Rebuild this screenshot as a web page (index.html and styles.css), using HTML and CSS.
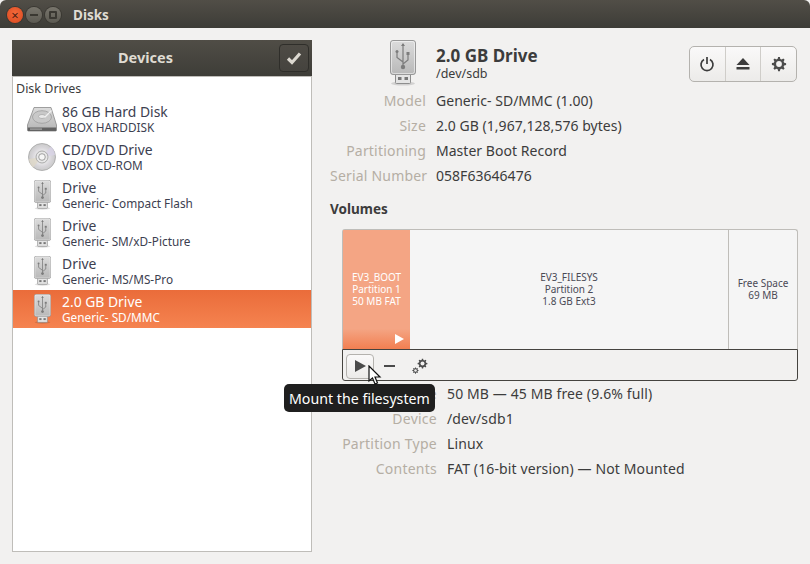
FILE: index.html
```html
<!DOCTYPE html>
<html lang="en">
<head>
<meta charset="utf-8">
<title>Disks</title>
<link rel="stylesheet" href="styles.css">
</head>
<body>
<svg class="defs" width="0" height="0" aria-hidden="true">
  <defs>
    <linearGradient id="usbBody" x1="0" y1="0" x2="0" y2="1"><stop offset="0" stop-color="#dcdcdc"/><stop offset="1" stop-color="#b8b8b8"/></linearGradient>
    <linearGradient id="hddTop" x1="0" y1="0" x2="0" y2="1"><stop offset="0" stop-color="#dcdcdc"/><stop offset="1" stop-color="#b4b4b4"/></linearGradient>
    <radialGradient id="cdDisc" cx="0.5" cy="0.5" r="0.5"><stop offset="0.3" stop-color="#f2f2f2"/><stop offset="0.7" stop-color="#d8d6da"/><stop offset="1" stop-color="#cacaca"/></radialGradient>
    <symbol id="usb" viewBox="0 0 26 46">
      <ellipse cx="13" cy="43.500" rx="12" ry="2" fill="#000" opacity=".13"/>
      <rect x="5.500" y="33" width="15" height="10.500" rx="1" fill="#e4e4e4" stroke="#8d8d8d"/>
      <rect x="8" y="37" width="3.500" height="3" fill="#777"/>
      <rect x="14.500" y="37" width="3.500" height="3" fill="#777"/>
      <rect x=".5" y=".5" width="25" height="34" rx="2.500" fill="url(#usbBody)" stroke="#989898"/>
      <rect x="1.500" y="1.500" width="23" height="32" rx="2" fill="none" stroke="#fff" stroke-opacity=".5"/>
      <path d="M13 4v22M13 22l-6-4.500v-5M13 24l5-4v-5" fill="none" stroke="#7c7c7c" stroke-width="1.200"/>
      <path d="M13 3l-2 3h4z" fill="#7c7c7c"/>
      <circle cx="7" cy="11.500" r="1.500" fill="#7c7c7c"/>
      <rect x="16.500" y="12" width="3" height="3" fill="#7c7c7c"/>
      <circle cx="13" cy="27" r="2.200" fill="#7c7c7c"/>
    </symbol>
    <symbol id="hdd" viewBox="0 0 30 25">
      <path d="M7 .5h17l5.500 17.500v5a1 1 0 0 1-1 1h-27a1 1 0 0 1-1-1v-5z" fill="url(#hddTop)" stroke="#8a8a8a" stroke-width=".8"/>
      <rect x=".8" y="20.500" width="28.400" height="3.500" fill="#626262"/>
      <rect x="3" y="21.500" width="12" height="1.200" fill="#aaa"/>
      <ellipse cx="15" cy="10" rx="9.500" ry="6.300" fill="#c8c8c8" stroke="#969696" stroke-width=".7"/>
      <ellipse cx="15" cy="9.500" rx="3.500" ry="2" fill="#e8e8e8" stroke="#9c9c9c" stroke-width=".6"/>
      <path d="M24.500 3.500l-7 7" stroke="#f0f0f0" stroke-width="1.200"/>
    </symbol>
    <symbol id="cd" viewBox="0 0 28 28">
      <circle cx="14" cy="14" r="13.500" fill="url(#cdDisc)" stroke="#a4a4a4" stroke-width=".8"/>
      <path d="M14 14L23 3.500A13 13 0 0 1 27 12z" fill="#d8d3e6" opacity=".8"/>
      <path d="M14 14L5 24.500A13 13 0 0 1 1 16z" fill="#ded8c8" opacity=".8"/>
      <circle cx="14" cy="14" r="6" fill="#e8e8e8" stroke="#9a9a9a" stroke-width=".8"/>
      <circle cx="14" cy="14" r="3.300" fill="#f6f6f6" stroke="#8a8a8a" stroke-width=".8"/>
    </symbol>
    <symbol id="gear" viewBox="0 0 16 16">
      <path d="M7.100 1h1.800l.4 1.900 1.400.6 1.600-1 1.300 1.300-1 1.600.6 1.400 1.900.4v1.800l-1.900.4-.6 1.400 1 1.600-1.300 1.300-1.600-1-1.400.6-.4 1.900H7.100l-.4-1.900-1.400-.6-1.600 1-1.300-1.300 1-1.600-.6-1.400-1.900-.4V7.100l1.900-.4.6-1.400-1-1.600 1.300-1.300 1.600 1 1.400-.6z" fill="#4c4c4c"/>
      <circle cx="8" cy="8" r="2.900" fill="#f2f1f0"/>
    </symbol>
  </defs>
</svg>

<div class="window">
  <header class="titlebar">
    <div class="wm">
      <span class="wm-btn wm-close">×</span>
      <span class="wm-btn wm-min"><i class="wm-dash"></i></span>
      <span class="wm-btn wm-max"><i class="wm-square"></i></span>
    </div>
    <span class="wm-title">Disks</span>
  </header>

  <div class="content">
    <aside class="sidebar">
      <div class="side-head">
        <span class="side-title">Devices</span>
        <span class="check-btn">
          <svg width="16" height="14" viewBox="0 0 16 14"><path d="M2 7.500l4 4L14 2.500" fill="none" stroke="#dcd8d0" stroke-width="3.200"/></svg>
        </span>
      </div>
      <div class="side-list">
        <div class="group-label">Disk Drives</div>
        <div class="row"><span class="row-icon"><svg width="30" height="25"><use href="#hdd"/></svg></span><span class="row-text"><b>86 GB Hard Disk</b><small>VBOX HARDDISK</small></span></div>
        <div class="row"><span class="row-icon"><svg width="28" height="28"><use href="#cd"/></svg></span><span class="row-text"><b>CD/DVD Drive</b><small>VBOX CD-ROM</small></span></div>
        <div class="row"><span class="row-icon"><svg width="17" height="30"><use href="#usb"/></svg></span><span class="row-text"><b>Drive</b><small>Generic- Compact Flash</small></span></div>
        <div class="row"><span class="row-icon"><svg width="17" height="30"><use href="#usb"/></svg></span><span class="row-text"><b>Drive</b><small>Generic- SM/xD-Picture</small></span></div>
        <div class="row"><span class="row-icon"><svg width="17" height="30"><use href="#usb"/></svg></span><span class="row-text"><b>Drive</b><small>Generic- MS/MS-Pro</small></span></div>
        <div class="row selected"><span class="row-icon"><svg width="17" height="30"><use href="#usb"/></svg></span><span class="row-text"><b>2.0 GB Drive</b><small>Generic- SD/MMC</small></span></div>
      </div>
    </aside>

    <main class="detail">
      <div class="drive-head">
        <svg class="drive-icon" width="26" height="46"><use href="#usb"/></svg>
        <div class="drive-names">
          <h1>2.0 GB Drive</h1>
          <p>/dev/sdb</p>
        </div>
        <div class="btn-group">
          <span class="tool"><svg width="16" height="16" viewBox="0 0 16 16"><path d="M5 3.500a6 6 0 1 0 6 0M8 1v7" fill="none" stroke="#3c3c3c" stroke-width="1.700"/></svg></span>
          <span class="tool"><svg width="14" height="12" viewBox="0 0 14 12"><path d="M7 0l6.500 7H.5z" fill="#3c3c3c"/><rect x=".5" y="9" width="13" height="2.500" fill="#3c3c3c"/></svg></span>
          <span class="tool"><svg width="16" height="16"><use href="#gear"/></svg></span>
        </div>
      </div>

      <dl class="props">
        <dt>Model</dt><dd>Generic- SD/MMC (1.00)</dd>
        <dt>Size</dt><dd>2.0 GB (1,967,128,576 bytes)</dd>
        <dt>Partitioning</dt><dd>Master Boot Record</dd>
        <dt>Serial Number</dt><dd>058F63646476</dd>
      </dl>

      <h2 class="volumes-title">Volumes</h2>

      <section class="volumes">
        <div class="parts">
          <div class="part part-sel">
            <span>EV3_BOOT<br>Partition 1<br>50 MB FAT</span>
            <svg class="part-play" width="9" height="10" viewBox="0 0 9 10"><path d="M0 0l9 5-9 5z" fill="#fff"/></svg>
          </div>
          <div class="part part-main"><span>EV3_FILESYS<br>Partition 2<br>1.8 GB Ext3</span></div>
          <div class="part part-free"><span>Free Space<br>69 MB</span></div>
        </div>
        <div class="vol-tools">
          <span class="play-btn"><svg width="11" height="12" viewBox="0 0 11 12"><path d="M0 0l11 6-11 6z" fill="#4a4a4a"/></svg></span>
          <span class="vol-tool"><svg width="11" height="2" viewBox="0 0 11 2"><rect width="11" height="2" fill="#4a4a4a"/></svg></span>
          <span class="vol-tool vol-gears"><svg width="16" height="16" viewBox="0 0 16 16"><use href="#gear" x="5" y="0" width="11" height="11"/><use href="#gear" x="0" y="9" width="7" height="7"/></svg></span>
        </div>
      </section>

      <dl class="props props-sub">
        <dt>Size</dt><dd>50 MB — 45 MB free (9.6% full)</dd>
        <dt>Device</dt><dd>/dev/sdb1</dd>
        <dt>Partition Type</dt><dd>Linux</dd>
        <dt>Contents</dt><dd>FAT (16-bit version) — Not Mounted</dd>
      </dl>
    </main>
  </div>

  <div class="tooltip">Mount the filesystem</div>
  <svg class="cursor" width="14" height="20" viewBox="0 0 14 20"><path d="M1 1v15l3.500-3 2.500 6 2.500-1-2.500-6H12z" fill="#fff" stroke="#111" stroke-width="1.200"/></svg>
</div>
</body>
</html>
```

FILE: styles.css
```css
* { box-sizing: border-box; }
html, body { margin: 0; padding: 0; background: #3c3b37; }
body { font-family: "Noto Sans", "Open Sans", sans-serif; color: #3c3c3c; }
.defs { position: absolute; }

.window { position: relative; width: 810px; height: 564px; overflow: hidden; background: #f2f1f0; display: flex; flex-direction: column; }

.titlebar { flex: none; height: 28px; display: flex; align-items: center; padding: 2px 0 0 7px; background: linear-gradient(#514e47, #3d3c37); border-radius: 6px 6px 0 0; }
.wm { display: flex; gap: 3px; }
.wm-btn { width: 16px; height: 16px; border-radius: 50%; display: flex; align-items: center; justify-content: center; }
.wm-close { background: radial-gradient(circle at 50% 40%, #f4693a, #d9481f); color: #4a2012; font-size: 13px; line-height: 1; box-shadow: 0 0 0 1px #3a3832; }
.wm-min, .wm-max { background: linear-gradient(#78756c, #5c5a52); box-shadow: 0 0 0 1px #3a3832; }
.wm-dash { width: 8px; height: 2px; background: #3a3832; }
.wm-square { width: 8px; height: 8px; border: 2px solid #3a3832; border-radius: 1px; }
.wm-title { margin-left: 12px; font-size: 13.500px; font-weight: 700; color: #dfdbd2; }

.content { flex: 1; display: flex; align-items: flex-start; padding: 12px 12px 0; }

.sidebar { flex: none; width: 300px; height: 512px; display: flex; flex-direction: column; }
.side-head { flex: none; height: 36px; display: flex; align-items: center; position: relative; padding-bottom: 2px; background: linear-gradient(#504d46, #3e3d38); }
.side-title { width: 100%; padding-right: 33px; text-align: center; font-size: 14.500px; font-weight: 700; color: #dfdbd2; }
.check-btn { position: absolute; right: 3px; top: 4px; width: 30px; height: 28px; display: flex; align-items: center; justify-content: center; border: 1px solid #2f2e2a; border-radius: 4px; background: linear-gradient(#4e4b45, #45433e); }
.side-list { flex: 1; background: #fff; border: 1px solid #bfbdb9; }
.group-label { height: 23px; padding: 3px 0 0 3px; font-size: 12.500px; line-height: 17px; color: #3c3c3c; }
.row { height: 38px; display: flex; align-items: center; }
.row-icon { flex: none; width: 49px; display: flex; justify-content: center; padding-left: 9px; }
.row-text { display: flex; flex-direction: column; margin-top: -2px; color: #3c4050; }
.row-text b { font-weight: 400; font-size: 13.900px; line-height: 17px; }
.row-text small { font-size: 11.800px; line-height: 14px; }
.row.selected { background: linear-gradient(#ea6c3a, #f58350); }
.row.selected .row-text { color: #fff; }

.detail { flex: 1; min-width: 0; margin-left: 18px; }
.drive-head { height: 48px; display: flex; align-items: flex-start; padding: 0 1px 0 60px; }
.drive-icon { flex: none; margin-right: 20px; }
.drive-names { padding-top: 5px; }
.drive-names h1 { margin: 0; font-size: 17px; line-height: 22px; font-weight: 700; color: #3c3c3c; }
.drive-names p { margin: 0; font-size: 12.500px; line-height: 14px; }
.btn-group { margin: 6px 0 0 auto; width: 108px; height: 36px; display: flex; border: 1px solid #b4b2ae; border-radius: 5px; background: linear-gradient(#faf9f9, #ecebe9); }
.tool { flex: 1; display: flex; align-items: center; justify-content: center; border-left: 1px solid #cfcdc9; }
.tool:first-child { border-left: 0; }

.props { margin: 0; display: grid; grid-template-columns: 96px 1fr; column-gap: 10px; grid-auto-rows: 25px; align-items: center; font-size: 14px; }
.props dt { text-align: right; letter-spacing: .2px; color: #b5aea4; white-space: nowrap; }
.props dd { margin: 0; letter-spacing: .03px; color: #3c3c3c; white-space: nowrap; }
.volumes-title { margin: 12px 0 10px; font-size: 13.500px; line-height: 19px; font-weight: 700; color: #3c3c3c; }

.volumes { margin-left: 12px; width: 456px; height: 152px; display: flex; flex-direction: column; }
.parts { height: 120px; display: flex; border: 1px solid #bfbdb9; border-bottom: 0; border-radius: 3px 3px 0 0; background: #f5f5f5; }
.part { position: relative; display: flex; align-items: center; justify-content: center; text-align: center; font-size: 10px; line-height: 12px; color: #4a4a55; }
.part span { margin-top: -2px; }
.part-sel { width: 67px; color: #fff; background: linear-gradient(#f4a584 83%, #f27f51); }
.part-main { flex: 1; }
.part-free { width: 69px; border-left: 1px solid #bfbdb9; }
.part-play { position: absolute; right: 6px; bottom: 5px; }
.vol-tools { height: 32px; display: flex; align-items: center; padding: 2px 0 0 3px; border: 1px solid #45433f; border-radius: 0 0 3px 3px; }
.play-btn { width: 28px; height: 25px; display: flex; align-items: center; justify-content: center; border: 1px solid #b4b2ae; border-radius: 4px; background: linear-gradient(#faf9f9, #ecebe9); }
.vol-tool { width: 30px; display: flex; align-items: center; justify-content: center; }
.vol-gears { padding-left: 2px; }

.props-sub { margin: 0 0 0 12px; grid-template-columns: 95px 1fr; }
.props-sub dt { letter-spacing: .25px; }
.props-sub dd { letter-spacing: .12px; }

.tooltip { position: absolute; left: 284px; top: 384px; width: 151px; height: 28px; padding-left: 5px; display: flex; align-items: center; border-radius: 5px; background: #1f1f1f; color: #fff; font-size: 14.200px; white-space: nowrap; }
.cursor { position: absolute; left: 368px; top: 365px; }
```
